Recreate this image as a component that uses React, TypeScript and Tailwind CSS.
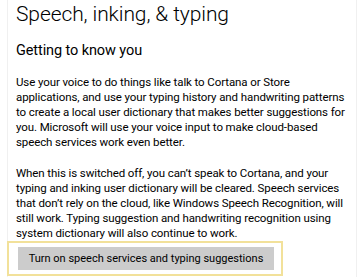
const intro = [
  'Use your voice to do things like talk to Cortana or Store',
  'applications, and use your typing history and handwriting patterns',
  'to create a local user dictionary that makes better suggestions for',
  'you. Microsoft will use your voice input to make cloud-based',
  'speech services work even better.',
]

const offNote = [
  'When this is switched off, you can’t speak to Cortana, and your',
  'typing and inking user dictionary will be cleared. Speech services',
  'that don’t rely on the cloud, like Windows Speech Recognition, will',
  'still work. Typing suggestion and handwriting recognition using',
  'system dictionary will also continue to work.',
]

const Paragraph = ({ lines, className }: { lines: string[]; className?: string }) => (
  <p className={`text-[11.5px] leading-[15px] tracking-[-0.1px] whitespace-nowrap ${className ?? ''}`}>
    {lines.map((line, i) => (
      <span key={i} className="block">
        {line}
      </span>
    ))}
  </p>
)

export default function App() {
  return (
    <div className="w-[358px] h-[277px] bg-white overflow-hidden font-['Roboto',sans-serif] text-black">
      <div className="ml-[7px] w-[350px] h-full border-x border-[#f0f0f0] pl-[8px]">
        <h1 className="text-[21px] leading-[29px] font-light tracking-[-0.1px]">
          Speech, inking, &amp; typing
        </h1>
        <h2 className="mt-[12px] text-[14.5px] leading-[20px] tracking-[-0.1px]">
          Getting to know you
        </h2>
        <Paragraph lines={intro} className="mt-[14px]" />
        <Paragraph lines={offNote} className="mt-[16px]" />
        <div className="-ml-[9px] w-[276px] border-2 border-[#f2e19a] pt-[2px] pb-[4px] pl-[9px] pr-[7px]">
          <button className="w-[256px] h-[23px] bg-[#cccccc] text-[11px] leading-[23px] text-black">
            Turn on speech services and typing suggestions
          </button>
        </div>
      </div>
    </div>
  )
}
